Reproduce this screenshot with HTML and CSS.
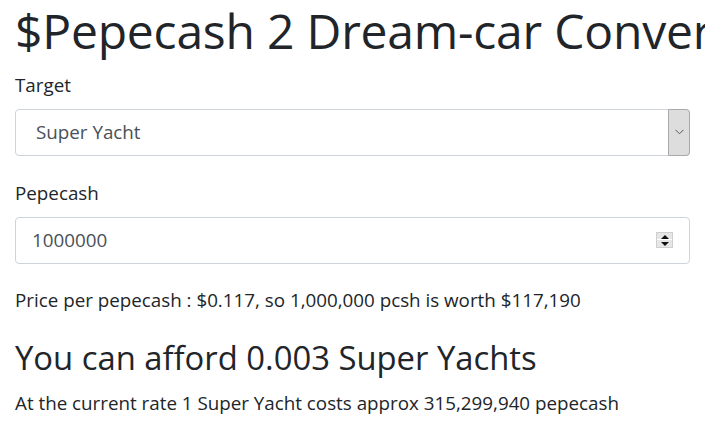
FILE: index.html
```html
<!DOCTYPE html>
<html lang="en">
<head>
    <meta charset="UTF-8">
    <title>$Pepecash 2 Dream-car Converter</title>
    <link rel="stylesheet" href="styles.css">
</head>
<body>

<div class="container">
    <h1 class="title">$Pepecash 2 Dream-car Converter</h1>

    <div class="form-group">
        <label for="target">Target</label>
        <div class="select-wrap">
            <select id="target" class="form-control">
                <option>Super Yacht</option>
            </select>
            <span class="select-arrow">
                <svg width="9" height="6" viewBox="0 0 9 6"><path d="M0.5 0.8 L4.5 4.8 L8.5 0.8" fill="none" stroke="#555" stroke-width="1"/></svg>
            </span>
        </div>
    </div>

    <div class="form-group">
        <label for="pepecash">Pepecash</label>
        <div class="number-wrap">
            <input type="text" id="pepecash" class="form-control number" value="1000000">
            <span class="spinner">
                <span class="spin up"></span>
                <span class="spin down"></span>
            </span>
        </div>
    </div>

    <p class="price">Price per pepecash : $0.117, so 1,000,000 pcsh is worth $117,190</p>

    <h2 class="afford">You can afford 0.003 Super Yachts</h2>
    <p class="rate">At the current rate 1 Super Yacht costs approx 315,299,940 pepecash</p>
</div>

</body>
</html>
```

FILE: styles.css
```css
body {
    font-family: "Open Sans", "Noto Sans", sans-serif;
    color: #212529;
    background: #ffffff;
    margin: 0;
    overflow: hidden;
}
.container {
    padding: 0 15px;
    white-space: nowrap;
}
.title {
    font-size: 48px;
    font-weight: 400;
    line-height: 1.2;
    margin: 0;
    padding-top: 2px;
    letter-spacing: -0.2px;
}
.form-group {
    margin-top: 11px;
    margin-bottom: 23px;
}
label {
    display: block;
    font-size: 18.8px;
    line-height: 28px;
    margin-bottom: 10px;
}
.select-wrap,
.number-wrap {
    position: relative;
    width: 675px;
}
.form-control {
    display: block;
    box-sizing: border-box;
    width: 100%;
    height: 47px;
    font-family: inherit;
    font-size: 18.8px;
    color: #495057;
    background: #ffffff;
    border: 1px solid #ced4da;
    border-radius: 4px;
    margin: 0;
    outline: none;
    -webkit-appearance: none;
    appearance: none;
}
select.form-control {
    padding: 0 20px;
}
.select-arrow {
    position: absolute;
    top: 0;
    right: 0;
    width: 22px;
    height: 47px;
    box-sizing: border-box;
    background: #dddddd;
    border: 1px solid #a9a9a9;
    border-radius: 0 4px 4px 0;
    display: flex;
    align-items: center;
    justify-content: center;
}
.number {
    padding: 0 16px;
}
.spinner {
    position: absolute;
    top: 15px;
    right: 17px;
    width: 17px;
    height: 16px;
    display: flex;
    flex-direction: column;
    background: #e6e6e6;
    border: 1px solid #cfcfcf;
    box-sizing: border-box;
}
.spin {
    flex: 1;
    position: relative;
}
.spin.up {
    border-bottom: 1px solid #ffffff;
}
.spin.up::after,
.spin.down::after {
    content: "";
    position: absolute;
    left: 4px;
    border-left: 4px solid transparent;
    border-right: 4px solid transparent;
}
.spin.up::after {
    top: 2px;
    border-bottom: 4px solid #111;
}
.spin.down::after {
    top: 2px;
    border-top: 4px solid #111;
}
.price {
    margin-top: -1px;
    font-size: 18.8px;
    line-height: 28px;
    margin-bottom: 24px;
}
.afford {
    font-size: 32.8px;
    font-weight: 400;
    line-height: 1.2;
    margin: 0 0 12px;
}
.rate {
    font-size: 18.8px;
    line-height: 28px;
    margin: 0;
}
```
